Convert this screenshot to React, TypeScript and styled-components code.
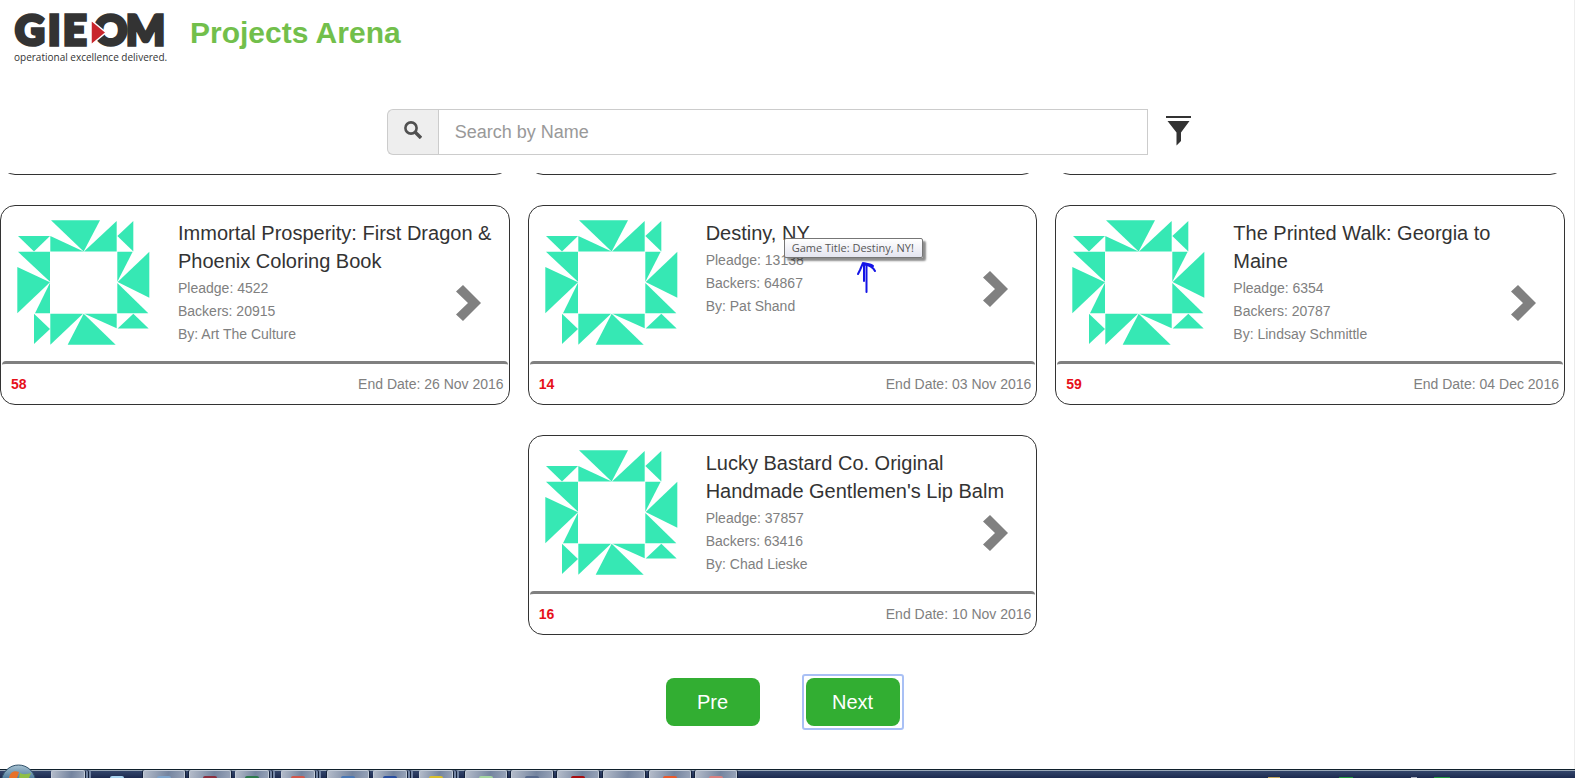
import React from "react";
import styled, { createGlobalStyle } from "styled-components";

const GlobalStyle = createGlobalStyle`
  *, *::before, *::after { box-sizing: border-box; }
  body {
    margin: 0;
    background: #fff;
    color: #333;
    font-family: "Liberation Sans", Arial, sans-serif;
    font-size: 14px;
  }
  button, input { font-family: inherit; }
  h1, h2, p { margin: 0; }
`;

const Page = styled.div`
  min-height: 100vh;
  display: flex;
  flex-direction: column;
  overflow: hidden;
`;

const Content = styled.div`
  flex: 1;
  border-right: 1px solid #eee;
`;

const Header = styled.header`
  display: flex;
  align-items: flex-start;
  gap: 22px;
  height: 109px;
  padding: 0 14px;
`;

const LogoLink = styled.a`
  display: block;
  color: #333;
  text-decoration: none;
`;

const PageTitle = styled.h1`
  padding-top: 12px;
  color: #72bf4b;
  font-size: 30px;
  line-height: 42px;
  font-weight: bold;
`;

const SearchBar = styled.form`
  display: flex;
  align-items: center;
  gap: 18px;
  width: 52%;
  margin: 0 auto 18px;
  padding: 0 5px 0 9px;
`;

const SearchGroup = styled.div`
  flex: 1;
  display: flex;
  height: 46px;
`;

const SearchLabel = styled.label`
  display: flex;
  align-items: center;
  justify-content: center;
  width: 51px;
  padding-bottom: 4px;
  background: #eee;
  border: 1px solid #ccc;
  border-right: 0;
  border-radius: 6px 0 0 6px;
`;

const SearchInput = styled.input`
  flex: 1;
  min-width: 0;
  padding: 0 16px;
  border: 1px solid #ccc;
  border-radius: 0;
  background: #fff;
  color: #555;
  font-size: 18px;
  outline: none;
  &::placeholder { color: #999; opacity: 1; }
`;

const IconButton = styled.button`
  display: block;
  padding: 0;
  border: 0;
  background: none;
  cursor: pointer;
  svg { display: block; }
`;

const Grid = styled.main`
  display: grid;
  grid-template-columns: repeat(3, 1fr);
  column-gap: 18px;
  row-gap: 30px;
  padding-right: 9px;
`;

const ScrolledCard = styled.div`
  display: flex;
  align-items: flex-end;
  height: 2px;
  overflow: hidden;
  &::after {
    content: "";
    flex: 1;
    flex-shrink: 0;
    height: 40px;
    border: 1px solid #333;
    border-radius: 15px;
  }
`;

const CardBox = styled.article<{ $centered?: boolean }>`
  position: relative;
  display: flex;
  flex-direction: column;
  min-height: 200px;
  grid-column: ${(p) => (p.$centered ? "2" : "auto")};
  border: 1px solid #333;
  border-radius: 15px;
`;

const CardBody = styled.div`
  flex: 1;
  display: flex;
  align-items: flex-start;
  gap: 28px;
  padding: 13px 14px 0 16px;
`;

const Avatar = styled.svg`
  flex: none;
  width: 133px;
  height: 125px;
  margin-top: 1px;
`;

const Info = styled.div`
  flex: 1;
  display: grid;
  grid-template-columns: 1fr auto;
  column-gap: 12px;
`;

const CardTitle = styled.h2`
  grid-column: 1 / 3;
  grid-row: 1;
  font-size: 20px;
  line-height: 28px;
  font-weight: normal;
`;

const Meta = styled.div`
  grid-column: 1;
  grid-row: 2;
  padding-top: 2px;
  color: #808080;
  line-height: 23px;
`;

const OpenButton = styled(IconButton)`
  grid-column: 2;
  grid-row: 1 / 3;
  align-self: center;
  padding: 40px 14px 0 0;
`;

const CardFooter = styled.footer`
  display: flex;
  align-items: center;
  justify-content: space-between;
  height: 43px;
  padding: 0 4px 0 9px;
  border-top: 3px solid #808080;
  border-radius: 4px 4px 0 0;
  margin: 0 1px;
  color: #808080;
`;

const Rank = styled.strong`
  color: #e6101a;
`;

const Tooltip = styled.div`
  position: absolute;
  left: 255px;
  top: 32px;
  height: 20px;
  padding: 0 8px 0 7px;
  border: 1px solid #767676;
  border-radius: 2px;
  background: linear-gradient(#fff, #e4e5f0);
  box-shadow: 3px 3px 2px rgba(0, 0, 0, 0.45);
  color: #575757;
  font-family: "Open Sans", "Noto Sans", sans-serif;
  font-size: 11px;
  line-height: 18px;
  white-space: nowrap;
`;

const PenArrow = styled.svg`
  position: absolute;
  left: 327px;
  top: 55px;
`;

const Pager = styled.nav`
  display: flex;
  justify-content: center;
  gap: 46px;
  padding: 43px 9px 43px 0;
`;

const PageButton = styled.button<{ $focused?: boolean }>`
  position: relative;
  width: 94px;
  height: 48px;
  border: 0;
  border-radius: 8px;
  background: #32ae32;
  color: #fff;
  font-size: 20px;
  cursor: pointer;
  outline: none;
  &::after {
    content: "";
    display: ${(p) => (p.$focused ? "block" : "none")};
    position: absolute;
    inset: -4px;
    border: 2px solid #a9c0f5;
    border-radius: 3px;
  }
`;

const Taskbar = styled.footer`
  position: relative;
  display: flex;
  justify-content: space-between;
  height: 9px;
  border-top: 1px solid #10202c;
  background: linear-gradient(#9aa9b8 0, #9aa9b8 1px, #33456b 1px, #1d2b50 8px);
`;

const StartOrb = styled.button`
  position: absolute;
  left: 1px;
  bottom: 0;
  padding: 0;
  border: 0;
  background: none;
  svg { display: block; }
`;

const TaskList = styled.div`
  display: flex;
  padding-left: 51px;
`;

const Task = styled.button<{ $w: number; $gap: number; $dark?: boolean }>`
  display: flex;
  justify-content: center;
  align-items: flex-end;
  width: ${(p) => p.$w}px;
  height: 8px;
  margin-right: ${(p) => p.$gap}px;
  padding: 0;
  border: ${(p) => (p.$dark ? "0" : "1px solid #c3ccd8")};
  border-bottom: 0;
  border-radius: 2px 2px 0 0;
  background: ${(p) =>
    p.$dark ? "transparent" : "linear-gradient(100deg, #b4bcca, #74849f 60%, #97a3b8)"};
  box-shadow: ${(p) =>
    p.$dark
      ? "none"
      : p.$gap > 4
      ? "1px 0 #14213a, 3px 0 #7486a5, 4px 0 #14213a, 6px 0 #7486a5"
      : "1px 0 #14213a, -1px 0 #14213a"};
`;

const Sliver = styled.span<{ $color: string; $w: number }>`
  width: ${(p) => p.$w}px;
  height: 2px;
  border-radius: 2px 2px 0 0;
  background: ${(p) => p.$color};
`;

const Tray = styled.div`
  display: flex;
  align-items: flex-end;
  width: 307px;
`;

const TrayIcon = styled(Sliver)<{ $gap: number }>`
  height: 1px;
  border-radius: 0;
  margin-right: ${(p) => p.$gap}px;
`;

interface Project {
  title: string;
  pledge: number;
  backers: number;
  by: string;
  rank: number;
  end: string;
  tip?: string;
  centered?: boolean;
}

const projects: Project[] = [
  { title: "Immortal Prosperity: First Dragon & Phoenix Coloring Book", pledge: 4522, backers: 20915, by: "Art The Culture", rank: 58, end: "26 Nov 2016" },
  { title: "Destiny, NY", pledge: 13138, backers: 64867, by: "Pat Shand", rank: 14, end: "03 Nov 2016", tip: "Game Title: Destiny, NY!" },
  { title: "The Printed Walk: Georgia to Maine", pledge: 6354, backers: 20787, by: "Lindsay Schmittle", rank: 59, end: "04 Dec 2016" },
  { title: "Lucky Bastard Co. Original Handmade Gentlemen's Lip Balm", pledge: 37857, backers: 63416, by: "Chad Lieske", rank: 16, end: "10 Nov 2016", centered: true },
];

const tasks = [
  { w: 34, gap: 7, color: "transparent" },
  { w: 50, gap: 1, color: "#a9d4f0", dark: true },
  { w: 42, gap: 4, color: "#7fa5cc" },
  { w: 42, gap: 4, color: "#8c3040" },
  { w: 34, gap: 12, color: "#2c7a4d" },
  { w: 34, gap: 12, color: "#d1584c" },
  { w: 42, gap: 4, color: "#4a78b5" },
  { w: 34, gap: 12, color: "#2a4fa0" },
  { w: 34, gap: 12, color: "#d9c02c" },
  { w: 42, gap: 4, color: "#a5d6a0" },
  { w: 42, gap: 4, color: "#586a8c" },
  { w: 42, gap: 4, color: "#a80f12" },
  { w: 42, gap: 4, color: "transparent" },
  { w: 42, gap: 4, color: "#ea5a2c" },
  { w: 42, gap: 4, color: "#d98080" },
];

const tray = [
  { w: 12, gap: 59, color: "#c2a65c" },
  { w: 14, gap: 58, color: "#1f9a3c" },
  { w: 6, gap: 17, color: "#a9b0c0" },
  { w: 16, gap: 0, color: "#1f9a3c" },
];

const identicon = [
  "153,91 300,91 251,184", "151,138 251,184 151,184", "350,93 350,184 252,184",
  "400,93 400,184 352,138", "54,138 150,138 102,184", "54,185 150,185 150,274",
  "52,230 150,276 52,368", "150,277 150,368 105,368", "352,185 398,185 352,274",
  "448,185 448,322 353,275", "352,278 445,368 352,368", "151,370 249,370 151,462",
  "251,370 347,462 203,462", "253,370 350,370 350,413", "102,370 150,415 102,460",
  "400,370 446,414 353,414",
];

function Logo() {
  return (
    <svg width="154" height="68" viewBox="0 -12 154 68" role="img" aria-label="GIEOM">
      <g fill="#333" stroke="#333" strokeWidth="3.500" fontFamily="Lato, sans-serif" fontWeight="900" fontSize="41">
        <text y="33" x="1">G</text>
        <text y="33" x="34">I</text>
        <text y="33" x="49">E</text>
        <text y="33" x="80">O</text>
        <text y="33" x="112">M</text>
      </g>
      <path d="M77 8 L92 20.500 L77 33 Z" fill="#c8252c" stroke="#fff" strokeWidth="1.500" />
      <text x="0" y="49" fill="#333" fontFamily="'Open Sans', sans-serif" fontWeight="500" fontSize="10">
        operational excellence delivered.
      </text>
    </svg>
  );
}

function ProjectCard({ p }: { p: Project }) {
  return (
    <CardBox $centered={p.centered}>
      <CardBody>
        <Avatar viewBox="51 90 399 373" preserveAspectRatio="none" aria-hidden="true">
          {identicon.map((pts) => (
            <polygon key={pts} points={pts} fill="#36e8b4" />
          ))}
        </Avatar>
        <Info>
          <CardTitle>{p.title}</CardTitle>
          <Meta>
            <p>Pleadge: {p.pledge}</p>
            <p>Backers: {p.backers}</p>
            <p>By: {p.by}</p>
          </Meta>
          <OpenButton type="button" aria-label={`Open ${p.title}`}>
            <svg width="25" height="36" viewBox="0 0 25 36">
              <path d="M7 0 L25 18 L7 36 L0 29.500 L12 18 L0 6.500 Z" fill="#808080" />
            </svg>
          </OpenButton>
        </Info>
      </CardBody>
      <CardFooter>
        <Rank>{p.rank}</Rank>
        <span>End Date: {p.end}</span>
      </CardFooter>
      {p.tip && (
        <>
          <Tooltip role="tooltip">{p.tip}</Tooltip>
          <PenArrow width="24" height="34" viewBox="0 0 24 34" fill="none" stroke="#1414e6" strokeWidth="2" strokeLinecap="round" strokeLinejoin="round" aria-hidden="true">
            <path d="M8 3 V20 M10.500 4 V31 M2 13 L4 9 L7 2 M7 2 C11 3 15 3 17 5 M8 3 C13 4 17 6 19 10" />
          </PenArrow>
        </>
      )}
    </CardBox>
  );
}

export default function App() {
  return (
    <Page>
      <GlobalStyle />
      <Content>
        <Header>
          <LogoLink href="#home"><Logo /></LogoLink>
          <PageTitle>Projects Arena</PageTitle>
        </Header>
        <SearchBar onSubmit={(e) => e.preventDefault()}>
          <SearchGroup>
            <SearchLabel htmlFor="search" aria-label="Search by name">
              <svg width="18" height="18" viewBox="0 0 18 18" fill="none" stroke="#505050">
                <circle cx="7" cy="7" r="5.600" strokeWidth="2.600" />
                <path d="M11 11 L17 17" strokeWidth="3.400" />
              </svg>
            </SearchLabel>
            <SearchInput id="search" type="text" placeholder="Search by Name" />
          </SearchGroup>
          <IconButton type="button" aria-label="Filter">
            <svg width="25" height="34" viewBox="0 0 25 34" fill="#333">
              <path d="M0 1 H25 V3 H0 Z M1.500 6 H23.500 L15 17.500 V26 L10.500 30.500 V17.500 Z" />
            </svg>
          </IconButton>
        </SearchBar>
        <Grid>
          <ScrolledCard />
          <ScrolledCard />
          <ScrolledCard />
          {projects.map((p) => (
            <ProjectCard key={p.rank} p={p} />
          ))}
        </Grid>
        <Pager aria-label="Pages">
          <PageButton type="button">Pre</PageButton>
          <PageButton type="button" $focused>Next</PageButton>
        </Pager>
      </Content>
      <Taskbar>
        <TaskList>
          {tasks.map((t, i) => (
            <Task key={i} type="button" aria-label={`Window ${i + 1}`} $w={t.w} $gap={t.gap} $dark={t.dark}>
              <Sliver $color={t.color} $w={14} />
            </Task>
          ))}
        </TaskList>
        <Tray>
          {tray.map((t, i) => (
            <TrayIcon key={i} $color={t.color} $w={t.w} $gap={t.gap} />
          ))}
        </Tray>
        <StartOrb type="button" aria-label="Start">
          <svg width="35" height="14" viewBox="0 0 35 14">
            <defs>
              <linearGradient id="orb" x1="0" y1="0" x2="0" y2="1">
                <stop offset="0" stopColor="#a9c3d3" />
                <stop offset="0.400" stopColor="#4d7b9c" />
              </linearGradient>
            </defs>
            <circle cx="17.500" cy="18" r="17" fill="url(#orb)" stroke="#31526b" />
            <path d="M8 14 C9 8 13 6 18 8 L16 14 Z" fill="#e8712a" />
            <path d="M19 9 C23 11 26 10 30 9 L28 14 H18 Z" fill="#8fbf45" />
          </svg>
        </StartOrb>
      </Taskbar>
    </Page>
  );
}
